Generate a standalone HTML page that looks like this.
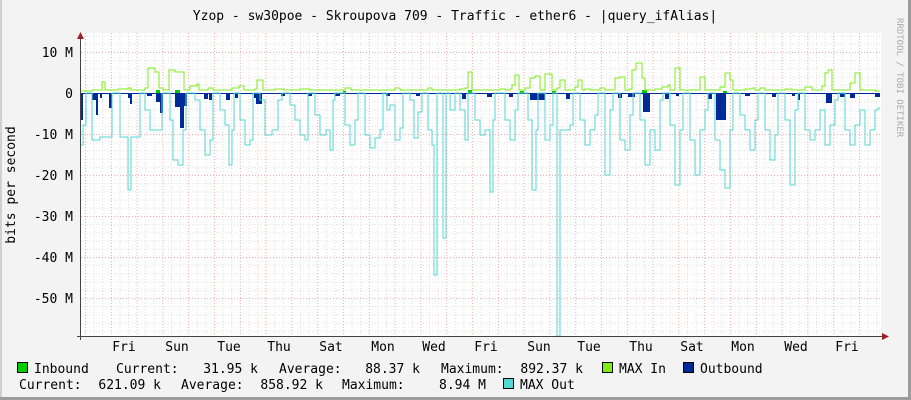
<!DOCTYPE html>
<html><head><meta charset="utf-8"><style>
html,body{margin:0;padding:0;background:#f3f3f3}
svg{display:block}
text{font-family:"DejaVu Sans Mono","Liberation Mono",monospace;font-size:13px;fill:#000}
</style></head><body>
<svg width="911" height="400" viewBox="0 0 911 400" xmlns="http://www.w3.org/2000/svg">
<defs>
<pattern id="vmin" x="85" y="0" width="8.6" height="400" patternUnits="userSpaceOnUse"><line x1="0.5" y1="0" x2="0.5" y2="400" stroke="#dedede" stroke-dasharray="1,2"/></pattern>
<pattern id="hmin" x="0" y="93" width="911" height="8.2" patternUnits="userSpaceOnUse"><line x1="0" y1="0.5" x2="911" y2="0.5" stroke="#dedede" stroke-dasharray="1,2"/></pattern>
<pattern id="vmaj" x="85" y="0" width="25.8" height="400" patternUnits="userSpaceOnUse"><line x1="0.5" y1="0" x2="0.5" y2="400" stroke="#f4b0b0" stroke-dasharray="1,2"/></pattern>
<pattern id="hmaj" x="0" y="52" width="911" height="41" patternUnits="userSpaceOnUse"><line x1="0" y1="0.5" x2="911" y2="0.5" stroke="#f4b0b0" stroke-dasharray="1,2"/></pattern>
</defs>
<rect x="0" y="0" width="911" height="400" fill="#f3f3f3"/>
<rect x="908" y="0" width="3" height="400" fill="#9c9c9c"/>
<rect x="0" y="397" width="911" height="3" fill="#9c9c9c"/>
<rect x="0" y="0" width="2" height="397" fill="#d0d0d0"/>
<rect x="81" y="33" width="800" height="303" fill="#fff"/>
<rect x="81" y="33" width="800" height="303" fill="url(#vmin)"/>
<rect x="81" y="33" width="800" height="303" fill="url(#hmin)"/>
<rect x="81" y="33" width="800" height="303" fill="url(#vmaj)"/>
<rect x="81" y="33" width="800" height="303" fill="url(#hmaj)"/>

<text x="455" y="20" text-anchor="middle">Yzop - sw30poe - Skroupova 709 - Traffic - ether6 - |query_ifAlias|</text>
<text transform="translate(897,18) rotate(90)" style="font-size:9px;fill:#aaa">RRDTOOL / TOBI OETIKER</text>
<text transform="translate(15,185) rotate(-90)" text-anchor="middle">bits per second</text>
<g text-anchor="end">
<text x="73" y="57">10 M</text><text x="73" y="98">0</text><text x="73" y="139">-10 M</text><text x="73" y="180">-20 M</text><text x="73" y="221">-30 M</text><text x="73" y="262">-40 M</text><text x="73" y="303">-50 M</text>
</g>
<g text-anchor="middle">
<text x="124" y="351">Fri</text><text x="177" y="351">Sun</text><text x="229" y="351">Tue</text><text x="279" y="351">Thu</text><text x="331" y="351">Sat</text><text x="383" y="351">Mon</text><text x="434" y="351">Wed</text><text x="486" y="351">Fri</text><text x="539" y="351">Sun</text><text x="589" y="351">Tue</text><text x="641" y="351">Thu</text><text x="692" y="351">Sat</text><text x="743" y="351">Mon</text><text x="796" y="351">Wed</text><text x="847" y="351">Fri</text>
</g>

<path fill="#002a97" d="M81 93V120H83V93ZM92 93V100H96V115H98V93ZM100 93V98H102V93ZM109 93V108H112V93ZM128 93V98H130V104H132V93ZM147 93V96H152V93ZM156 93V102H160V113H163V93ZM175 93V107H180V128H184V106H187V93ZM204 93V99H208V93ZM209 93V100H212V93ZM226 93V100H230V93ZM235 93V98H238V93ZM254 93V98H256V104H262V93ZM281 93V96H285V93ZM308 93V96H312V93ZM335 93V96H340V93ZM386 93V96H390V93ZM416 93V96H420V93ZM462 93V99H466V93ZM487 93V97H492V93ZM509 93V97H513V93ZM530 93V100H545V93ZM566 93V99H570V93ZM618 93V98H622V93ZM628 93V97H635V93ZM643 93V112H650V93ZM665 93V99H669V93ZM676 93V96H679V93ZM708 93V99H712V93ZM716 93V120H726V93ZM745 93V96H750V93ZM772 93V97H776V93ZM792 93V96H795V93ZM798 93V100H800V93ZM826 93V103H832V93ZM840 93V97H845V93ZM850 93V98H855V93ZM875 93V97H880V93Z"/>
<path fill="none" stroke="#002a97" stroke-width="1" d="M81 93.5H880"/>
<path fill="#00cc00" d="M156 93V90H160V93ZM175 93V90H180V93ZM343 93V91H346V93ZM468 93V90H472V93ZM520 93V91H524V93ZM552 93V91H556V93ZM642 93V90H647V93ZM723 93V91H727V93Z"/>
<path fill="none" stroke="#7cec1a" stroke-width="1" d="M81 91H92V90H102V82H105V90H118V89H128V88H131V90H145V88H148V68H155V72H159V88H163V90H169V70H175V72H184V90H190V86H197V84H199V90H204V90H208V88H213V90H232V88H239V86H244V90H255V89H257V80H263V90H275V89H284V90H300V89H310V90H345V88H351V90H380V90H395V88H400V90H420V90H428V88H432V90H460V89H465V88H468V72H472V90H490V90H500V89H505V90H510V89H512V85H515V75H519V90H525V88H530V78H535V76H540V90H545V74H552V90H557V88H560V80H565V90H575V87H578V80H582V90H585V89H590V90H600V88H605V90H615V78H620V77H625V90H630V89H632V70H636V63H642V78H645V90H655V89H662V87H668V85H670V90H673V90H675V68H680V90H700V77H705V90H710V90H718V90H720V87H725V73H730V80H733V90H745V89H752V88H755V90H760V88H765V90H775V90H785V89H792V90H805V87H812V90H822V86H825V73H828V70H832V90H840V90H850V83H855V73H860V90H868V90H875V91H880"/>
<path fill="none" stroke="#55d7d3" stroke-width="1" d="M81 145H83V125H86V93H92V140H100V137H112V93H118V93H120V137H128V190H131V137H134V137H140V93H145V110H150V130H158V130H162V93H165V93H170V120H173V160H178V165H183V130H186V93H190V93H195V100H200V130H205V155H210V140H213V93H215V93H220V110H225V125H229V165H232V130H234V93H236V93H240V120H245V145H250V140H253V93H255V93H260V100H265V135H272V130H278V100H282V93H285V93H290V105H295V120H300V135H305V140H308V93H310V93H315V115H320V135H326V130H330V150H333V100H335V93H340V93H345V125H350V145H355V120H358V93H360V93H365V135H370V148H375V138H380V130H383V93H387V110H390V105H395V140H400V128H403V93H405V93H410V100H414V138H418V112H422V93H428V130H432V145H434V275H437V93H443V238H446V93H450V110H455V93H460V110H465V140H468V93H470V93H475V120H480V135H485V130H490V192H493V120H495V93H500V93H505V120H510V140H515V110H518V93H520V93H528V120H532V190H536V130H538V93H540V93H545V140H550V125H553V93H557V336H560V336M560 336V130H570V125H573V93H575V93H580V120H585V145H590V130H595V115H598V93H600V93H605V175H610V110H613V93H615V93H620V140H625V150H630V115H633V93H635V93H640V120H645V165H650V130H655V150H660V100H663V93H665V93H670V125H675V185H680V130H683V93H685V93H690V140H695V175H700V130H705V110H708V93H710V93H715V140H720V170H725V188H730V130H733V93H735V93H740V115H745V130H750V150H755V120H758V93H760V93H765V130H770V160H775V135H778V93H780V93H785V120H790V185H795V110H798V93H800V93H805V130H810V140H815V130H820V110H825V145H830V125H835V100H838V93H840V93H845V130H850V145H855V125H860V110H865V145H870V130H875V110H878V108H880"/>

<path stroke="#444" stroke-width="1" fill="none" d="M80.5 38V340M77 336.5H885"/>
<path fill="#a02020" d="M77 39L80.5 32L84 39ZM882 333L889 336.5L882 340Z"/>

<rect x="17.5" y="362.5" width="10" height="10" fill="#00cc00" stroke="#000"/>
<text x="34" y="373">Inbound</text>
<text x="116" y="373">Current:</text><text x="258" y="373" text-anchor="end">31.95 k</text>
<text x="279" y="373">Average:</text><text x="420" y="373" text-anchor="end">88.37 k</text>
<text x="441" y="373">Maximum:</text><text x="583" y="373" text-anchor="end">892.37 k</text>
<rect x="602.5" y="362.5" width="10" height="10" fill="#7cec1a" stroke="#000"/>
<text x="619" y="373">MAX In</text>
<rect x="683.5" y="362.5" width="10" height="10" fill="#002a97" stroke="#000"/>
<text x="700" y="373">Outbound</text>
<text x="19" y="389">Current:</text><text x="161" y="389" text-anchor="end">621.09 k</text>
<text x="181" y="389">Average:</text><text x="323" y="389" text-anchor="end">858.92 k</text>
<text x="342" y="389">Maximum:</text><text x="486" y="389" text-anchor="end">8.94 M</text>
<rect x="503.5" y="378.5" width="10" height="10" fill="#55d7d3" stroke="#000"/>
<text x="520" y="389">MAX Out</text>
</svg>
</body></html>
